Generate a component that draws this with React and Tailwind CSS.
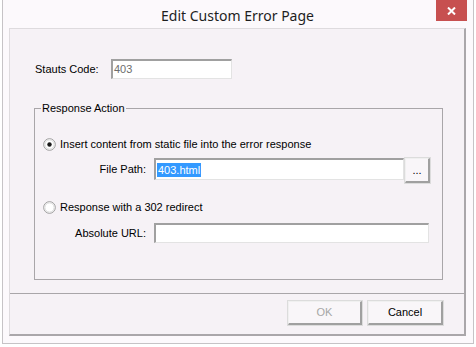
import React from 'react';

const font = { fontFamily: '"Liberation Sans", Arial, sans-serif' };

const Radio = ({ checked }) => (
  <svg width="13" height="13" viewBox="0 0 13 13" className="shrink-0">
    <circle cx="6.5" cy="6.5" r="5.8" fill="#ffffff" stroke="#9a9a9a" strokeWidth="1" />
    <circle cx="6.5" cy="6.5" r="4.6" fill="none" stroke="#dcdcdc" strokeWidth="1" />
    {checked && <circle cx="6.5" cy="6.5" r="2.2" fill="#1a1a1a" />}
  </svg>
);

const TextBox = ({ value, className = '', selected, muted }) => (
  <div
    className={`h-[20px] bg-white border-t-2 border-l-2 border-t-[#a0a0a0] border-l-[#a0a0a0] border-b border-r border-b-[#e3e3e3] border-r-[#e3e3e3] flex items-center pl-[1px] text-[11px] ${className}`}
  >
    {selected ? (
      <span className="bg-[#3399ff] text-white leading-[14px] px-[1px]">{value}</span>
    ) : (
      <span className={muted ? 'text-[#6d6d6d]' : 'text-black'}>{value}</span>
    )}
  </div>
);

const Button = ({ children, className = '', disabled }) => (
  <div
    className={`bg-[#f9f6f9] border-t border-l border-t-[#f0f0f0] border-l-[#f0f0f0] border-b-2 border-r-2 border-b-[#a0a0a0] border-r-[#a0a0a0] outline outline-1 outline-[#dcdcdc] flex items-center justify-center text-[11px] ${disabled ? 'text-[#a6a6a6]' : 'text-black'} ${className}`}
  >
    {children}
  </div>
);

export default function App() {
  return (
    <div className="w-[476px] h-[347px] bg-white px-[2px] pb-[3px]" style={font}>
      <div className="relative h-full flex flex-col border-x border-b border-[#c6c3c6] bg-[#fcf9fc] pl-[6px] pr-[7px] pb-[7px]">
        {/* title bar */}
        <div className="h-[28px] flex items-center justify-center">
          <span className="text-[14px] text-[#1e1e1e] mt-[3px]" style={{ fontFamily: '"Noto Sans", "Open Sans", sans-serif' }}>
            Edit Custom Error Page
          </span>
        </div>
        <div className="absolute top-0 right-[6px] w-[31px] h-[21px] bg-[#c75050] flex items-center justify-center">
          <svg width="9" height="8" viewBox="0 0 9 8">
            <path d="M1 0.5 L8 7.5 M8 0.5 L1 7.5" stroke="#ffffff" strokeWidth="2" />
          </svg>
        </div>

        {/* client area */}
        <div className="flex-1 flex flex-col bg-[#f6f2f6] border-t border-l border-t-[#dedbde] border-l-[#dedbde] border-b-2 border-r-2 border-b-[#aaa7aa] border-r-[#aaa7aa]">
          <div className="flex items-center mt-[30px] pl-[25px] h-[20px]">
            <span className="w-[76px] text-[11px] text-black">Stauts Code:</span>
            <TextBox value="403" muted className="w-[121px]" />
          </div>

          <fieldset className="ml-[24px] w-[409px] h-[178px] mt-[23px] border border-[#a9a6a9] pl-[8px]">
            <legend className="ml-[-2px] px-[1px] text-[11px] leading-[13px] text-black">Response Action</legend>
            <div className="flex items-center gap-[4px] h-[13px] mt-[23px]">
              <Radio checked />
              <span className="text-[11px] text-black">Insert content from static file into the error response</span>
            </div>
            <div className="flex items-start mt-[7px]">
              <span className="w-[111px] pr-[8px] text-right text-[11px] text-black leading-[22px]">File Path:</span>
              <TextBox value="403.html" selected className="w-[250px] h-[22px]" />
              <Button className="w-[25px] h-[25px] ml-[1px]">...</Button>
            </div>
            <div className="flex items-center gap-[4px] h-[13px] mt-[18px]">
              <Radio />
              <span className="text-[11px] text-black">Response with a 302 redirect</span>
            </div>
            <div className="flex items-center mt-[9px]">
              <span className="w-[111px] pr-[8px] text-right text-[11px] text-black">Absolute URL:</span>
              <TextBox value="" className="w-[275px]" />
            </div>
          </fieldset>

          <div className="mt-[13px] border-t border-[#a9a6a9]" />
          <div className="flex justify-end gap-[6px] mt-[7px] pr-[21px]">
            <Button disabled className="w-[74px] h-[24px]">OK</Button>
            <Button className="w-[75px] h-[24px]">Cancel</Button>
          </div>
        </div>
      </div>
    </div>
  );
}
